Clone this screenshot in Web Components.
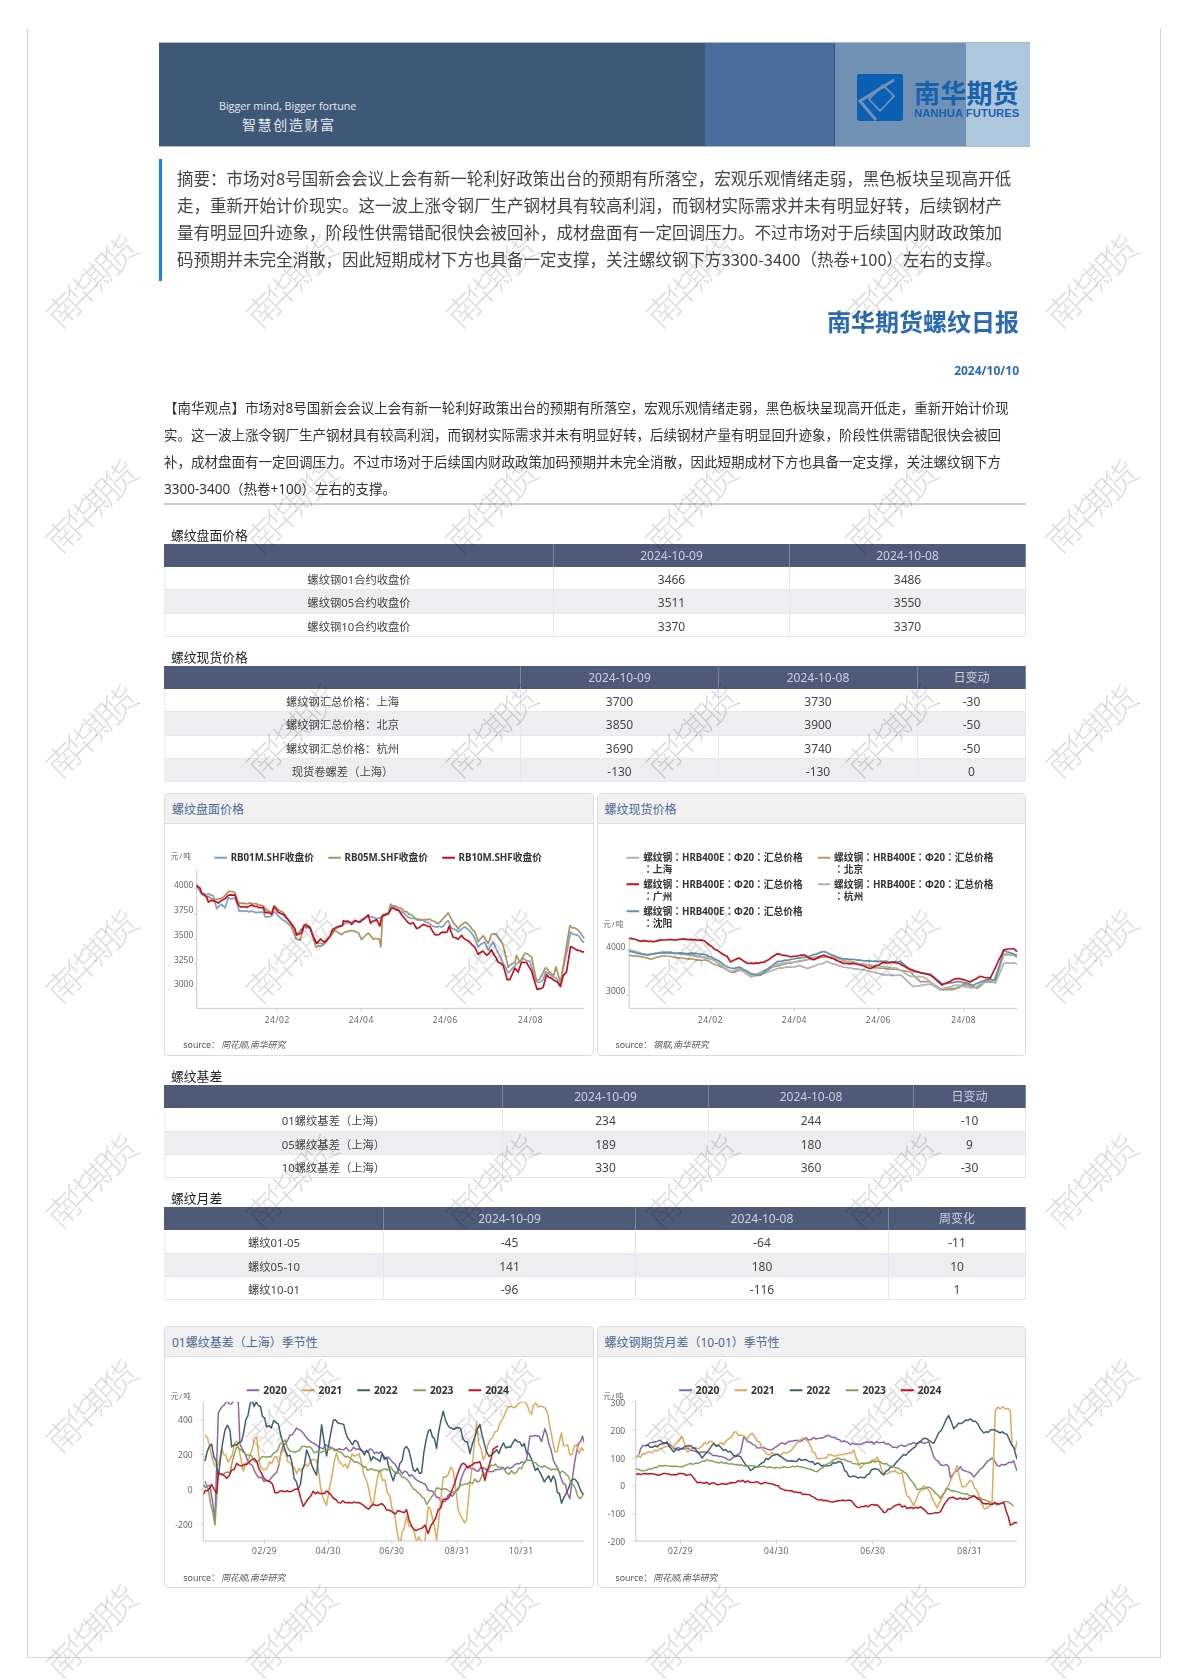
<!DOCTYPE html>
<html lang="zh-CN"><head><meta charset="utf-8"><title>南华期货螺纹日报</title>
<style>
html,body{margin:0;padding:0;background:#fff}
body{font-family:"Noto Sans","Noto Sans CJK SC",sans-serif}
nh-page{filter:blur(.3px)}
</style></head>
<body>
<nh-page>
  <nh-banner>
    <span slot="en">Bigger mind, Bigger fortune</span>
    <span slot="cn">智慧创造财富</span>
  </nh-banner>
  <nh-summary>摘要：市场对8号国新会会议上会有新一轮利好政策出台的预期有所落空，宏观乐观情绪走弱，黑色板块呈现高开低<br>走，重新开始计价现实。这一波上涨令钢厂生产钢材具有较高利润，而钢材实际需求并未有明显好转，后续钢材产<br>量有明显回升迹象，阶段性供需错配很快会被回补，成材盘面有一定回调压力。不过市场对于后续国内财政政策加<br>码预期并未完全消散，因此短期成材下方也具备一定支撑，关注螺纹钢下方3300-3400（热卷+100）左右的支撑。</nh-summary>
  <nh-heading>
    <span slot="title">南华期货螺纹日报</span>
    <span slot="date">2024/10/10</span>
  </nh-heading>
  <nh-view>【南华观点】市场对8号国新会会议上会有新一轮利好政策出台的预期有所落空，宏观乐观情绪走弱，黑色板块呈现高开低走，重新开始计价现<br>实。这一波上涨令钢厂生产钢材具有较高利润，而钢材实际需求并未有明显好转，后续钢材产量有明显回升迹象，阶段性供需错配很快会被回<br>补，成材盘面有一定回调压力。不过市场对于后续国内财政政策加码预期并未完全消散，因此短期成材下方也具备一定支撑，关注螺纹钢下方<br>3300-3400（热卷+100）左右的支撑。</nh-view>

  <nh-table style="--cols:390px 236px 1fr;--mt:24px">
    <span slot="title">螺纹盘面价格</span>
    <nh-row head><span></span><span>2024-10-09</span><span>2024-10-08</span></nh-row>
    <nh-row><span>螺纹钢01合约收盘价</span><span>3466</span><span>3486</span></nh-row>
    <nh-row alt><span>螺纹钢05合约收盘价</span><span>3511</span><span>3550</span></nh-row>
    <nh-row><span>螺纹钢10合约收盘价</span><span>3370</span><span>3370</span></nh-row>
  </nh-table>
  <nh-table style="--cols:357px 198px 199px 1fr;--mt:14px">
    <span slot="title">螺纹现货价格</span>
    <nh-row head><span></span><span>2024-10-09</span><span>2024-10-08</span><span>日变动</span></nh-row>
    <nh-row><span>螺纹钢汇总价格：上海</span><span>3700</span><span>3730</span><span>-30</span></nh-row>
    <nh-row alt><span>螺纹钢汇总价格：北京</span><span>3850</span><span>3900</span><span>-50</span></nh-row>
    <nh-row><span>螺纹钢汇总价格：杭州</span><span>3690</span><span>3740</span><span>-50</span></nh-row>
    <nh-row alt><span>现货卷螺差（上海）</span><span>-130</span><span>-130</span><span>0</span></nh-row>
  </nh-table>
  <nh-cards style="--mt:11px;--h:263px">
    <nh-card chart="a"><span slot="title">螺纹盘面价格</span></nh-card>
    <nh-card chart="b"><span slot="title">螺纹现货价格</span></nh-card>
  </nh-cards>
  <nh-table style="--cols:339px 206px 205px 1fr;--mt:14px">
    <span slot="title">螺纹基差</span>
    <nh-row head><span></span><span>2024-10-09</span><span>2024-10-08</span><span>日变动</span></nh-row>
    <nh-row><span>01螺纹基差（上海）</span><span>234</span><span>244</span><span>-10</span></nh-row>
    <nh-row alt><span>05螺纹基差（上海）</span><span>189</span><span>180</span><span>9</span></nh-row>
    <nh-row><span>10螺纹基差（上海）</span><span>330</span><span>360</span><span>-30</span></nh-row>
  </nh-table>
  <nh-table style="--cols:220px 252px 253px 1fr;--mt:14px">
    <span slot="title">螺纹月差</span>
    <nh-row head><span></span><span>2024-10-09</span><span>2024-10-08</span><span>周变化</span></nh-row>
    <nh-row><span>螺纹01-05</span><span>-45</span><span>-64</span><span>-11</span></nh-row>
    <nh-row alt><span>螺纹05-10</span><span>141</span><span>180</span><span>10</span></nh-row>
    <nh-row><span>螺纹10-01</span><span>-96</span><span>-116</span><span>1</span></nh-row>
  </nh-table>
  <nh-cards style="--mt:26px;--h:262px">
    <nh-card chart="c"><span slot="title">01螺纹基差（上海）季节性</span></nh-card>
    <nh-card chart="d"><span slot="title">螺纹钢期货月差（10-01）季节性</span></nh-card>
  </nh-cards>
  <nh-watermark></nh-watermark>
</nh-page>
<script>
const def=(name,html,extra)=>{
  customElements.define(name,class extends HTMLElement{
    constructor(){super();this.attachShadow({mode:'open'}).innerHTML=html;}
    connectedCallback(){if(extra)extra(this);}
  });
};
const CJK='"Noto Sans","Noto Sans CJK SC",sans-serif';
def('nh-page',`<style>
:host{display:block;position:relative;width:1188px;height:1680px;overflow:hidden;box-sizing:border-box;padding-top:28px;font-family:${CJK}}
.frame{box-sizing:border-box;margin:0 27px;width:1134px;height:1630px;border:1px solid #d6d6d6;border-top:0;padding:14px 0 0 131px}
.col{width:871px}
</style><div class="frame"><div class="col"><slot></slot></div></div><slot name="over"></slot>`);

def('nh-banner',`<style>
:host{display:flex;position:relative;height:105px;box-sizing:border-box;border-top:1px solid #aab9cc;border-bottom:1px solid #aab9cc}
.b1{width:547px;background:#3f5878;box-sizing:border-box;padding:56px 0 0 60px;color:#e4e8ee}
.b2{width:129px;background:#4a6d9e;border-right:1px solid #3d5877}
.b3{width:131px;background:#7192b5}
.b4{width:64px;background:#afc7dd}
.en{font:10.7px/14px "Open Sans","Noto Sans",sans-serif;width:137px;white-space:nowrap}
.cn{font:14px/20px "Noto Sans CJK SC",sans-serif;letter-spacing:1.6px;margin:1px 0 0 23px;white-space:nowrap}
.logo{position:absolute;left:698px;top:31px;width:164px;height:48px}
.logo svg{position:absolute;left:0;top:0}
.t1{position:absolute;left:57px;top:3px;font:bold 26px/30px "Noto Sans CJK SC",sans-serif;color:#1862ae;letter-spacing:.2px;white-space:nowrap}
.t2{position:absolute;left:57px;top:33px;font:bold 11.2px/13px "Liberation Sans",sans-serif;color:#1862ae;white-space:nowrap;letter-spacing:.1px}
</style>
<div class="b1"><div class="en"><slot name="en"></slot></div><div class="cn"><slot name="cn"></slot></div></div>
<div class="b2"></div><div class="b3"></div><div class="b4"></div>
<div class="logo">
<svg width="46" height="47" viewBox="0 0 46 47"><rect width="46" height="47" rx="3" fill="#0b60b3"/>
<path d="M37 6 L3 27 L19 46" stroke="#7192b5" stroke-width="3" fill="none"/><path d="M12 25 L26 11 L37 22 L23 37Z" stroke="#7192b5" stroke-width="1.8" fill="none"/></svg>
<div class="t1">南华期货</div><div class="t2">NANHUA FUTURES</div></div>`);

def('nh-summary',`<style>
:host{display:block;margin-top:12px;height:122px;box-sizing:border-box;border-left:3px solid #1a7ff0;padding:6px 0 0 15px;font:16.5px/27px "Noto Sans CJK SC",sans-serif;color:#444;white-space:nowrap}
</style><slot></slot>`);

def('nh-heading',`<style>
:host{display:block;text-align:right;padding-right:11px;color:#2a6ab5;font-family:"Noto Sans CJK SC",sans-serif}
.t{margin-top:24px;font-size:24px;font-weight:700;line-height:32px}
.d{margin-top:26px;font:700 12px/16px "Noto Sans",sans-serif}
</style><div class="t"><slot name="title"></slot></div><div class="d"><slot name="date"></slot></div>`);

def('nh-view',`<style>
:host{display:block;margin:16px 4px 0 5px;height:110px;box-sizing:border-box;border-bottom:2px solid #ccc;font:13.5px/27px "Noto Sans","Noto Sans CJK SC",sans-serif;color:#333;white-space:nowrap}
</style><slot></slot>`);

def('nh-table',`<style>
:host{display:block;margin:var(--mt,14px) 4px 0 5px}
.title{height:15px;line-height:13px;padding-left:7px;font-size:12.8px;color:#222;white-space:nowrap}
</style><div class="title"><slot name="title"></slot></div><slot></slot>`);

def('nh-row',`<style>
:host{display:grid;grid-template-columns:var(--cols);height:23.33px;box-sizing:border-box;background:#fff;border-bottom:1px solid #e6e8ee;font-size:12px;line-height:25px;color:#444}
:host([alt]){background:#eeeef0}
:host([head]){height:23px;background:#4e5a78;color:#ccd1dd;border:0;line-height:24px}
::slotted(span){display:block;text-align:center;border-right:1px solid #e6e8ee;box-sizing:border-box;white-space:nowrap;min-height:1px;overflow:visible}
::slotted(span:first-child){font-size:11.3px;border-left:1px solid #eceef2}
:host([head]) ::slotted(span){border-right-color:#7d87a0;border-left-color:transparent}
</style><slot></slot>`);

def('nh-cards',`<style>
:host{display:flex;gap:3px;margin:var(--mt,11px) 4px 0 5px;height:var(--h)}
</style><slot></slot>`);

/* ---------- chart data: traced in a 3× coordinate space ---------- */
const P=s=>s.trim().split(/\s+/).map(p=>p.split(',').map(Number));
const C20='#8d64a6',C21='#e0a858',C22='#3c5e6e',C23='#84a35a',C24='#c8101a';
const yearLegend=(dx)=>[['2020',C20,290],['2021',C21,456],['2022',C22,622],['2023',C23,790],['2024',C24,956]].map(([t,c,x])=>({t,c,x:x-dx,y:238,tx:x-dx+50}));
const CHARTS={
a:{x0:45,y0:132,h:693,axX:140,axT:268,axB:685,axR:1303,yr:130,unit:[62,227],legSize:29.3,
  yl:[['4000',314,325],['3750',388,402],['3500',465,478],['3250',538,552],['3000',612,627]],
  xl:[['24/02',382],['24/04',634],['24/06',886],['24/08',1142]],src:['source：','同花顺,南华研究',100],
  legend:[{t:'RB01M.SHF收盘价',c:'#7ba0c8',x:193,y:233,tx:242},{t:'RB05M.SHF收盘价',c:'#ab9261',x:535,y:233,tx:584},{t:'RB10M.SHF收盘价',c:'#cc0d16',x:877,y:233,tx:926}],
  step:7,amp:2.2,lw:5,
  s:[['#7ba0c8','140,318 155,340 190,345 200,385 215,375 225,382 235,355 255,355 268,393 290,393 340,398 345,412 365,410 372,395 400,420 425,440 440,465 462,440 480,445 498,490 520,490 540,470 555,445 578,435 605,425 630,422 655,410 680,415 695,412 715,400 725,380 750,390 780,415 820,420 855,442 880,440 895,420 905,445 925,455 945,440 970,465 985,500 1005,485 1015,510 1030,485 1045,520 1075,578 1100,550 1120,535 1140,545 1160,608 1180,600 1187,575 1220,595 1230,615 1250,520 1262,458 1285,468 1303,488'],
     ['#ab9261','140,312 155,340 175,350 190,358 215,355 235,335 255,337 265,368 290,370 310,370 340,378 350,392 365,398 372,378 400,398 420,430 438,478 450,480 465,432 480,438 498,500 515,498 535,478 555,452 575,462 600,450 625,458 635,478 655,458 670,478 688,475 693,502 698,405 715,398 722,373 750,385 785,405 800,420 840,418 865,432 895,400 905,420 925,445 945,425 975,455 985,485 1000,465 1015,490 1025,462 1040,462 1060,495 1075,560 1095,548 1100,525 1110,548 1125,518 1145,530 1160,600 1170,595 1187,565 1212,585 1218,562 1232,610 1245,530 1260,438 1285,450 1303,475'],
     ['#cc0d16','140,318 150,322 155,340 170,350 175,365 185,360 195,362 205,368 215,362 225,358 235,345 255,343 262,370 268,380 290,380 300,376 320,380 340,385 345,400 355,395 365,403 372,382 385,398 400,402 410,412 425,432 435,445 440,463 455,460 462,435 480,442 490,470 500,490 512,475 525,488 540,468 548,448 565,438 578,438 580,422 600,425 605,432 615,420 630,428 655,405 662,428 680,418 690,438 695,410 715,402 725,385 745,392 765,418 780,430 790,428 800,445 820,433 840,440 855,465 880,458 892,455 898,440 910,470 925,478 935,468 960,488 975,500 985,525 1000,512 1010,528 1025,510 1045,545 1060,555 1072,598 1080,600 1095,565 1105,578 1115,548 1130,548 1145,572 1162,630 1180,622 1190,585 1220,605 1232,618 1240,585 1250,575 1262,500 1285,512 1303,515']]},
b:{x0:22.5,y0:132,h:693,axX:116,axT:470,axB:685,axR:1280,yr:105,unit:[38,432],legSize:29.2,legFont:'"Noto Sans","Noto Sans CJK TC",sans-serif',legLang:'zh-TW',
  yl:[['4000',500,512],['3000',632,645]],
  xl:[['24/02',360],['24/04',612],['24/06',864],['24/08',1120]],src:['source：','钢联,南华研究',75],
  legend:[{t:'螺纹钢：HRB400E：Φ20：汇总价格',t2:'：上海',c:'#b0b0b0',x:108,y:233,tx:158},{t:'螺纹钢：HRB400E：Φ20：汇总价格',t2:'：北京',c:'#b09a68',x:682,y:233,tx:731},
  {t:'螺纹钢：HRB400E：Φ20：汇总价格',t2:'：广州',c:'#c8101a',x:108,y:313,tx:158},{t:'螺纹钢：HRB400E：Φ20：汇总价格',t2:'：杭州',c:'#b4b4b4',x:682,y:313,tx:731},
  {t:'螺纹钢：HRB400E：Φ20：汇总价格',t2:'：沈阳',c:'#5c93a8',x:108,y:394,tx:158}],
  step:8,amp:1.3,lw:5,
  s:[['#b0b0b0','116,508 170,525 220,515 300,525 370,540 420,578 450,570 480,590 510,585 560,565 630,558 650,565 710,545 760,562 820,570 880,585 930,585 970,620 1020,612 1050,630 1090,628 1120,612 1160,625 1190,602 1215,610 1240,550 1270,548 1280,552'],
     ['#b09a68','116,525 150,530 180,537 220,527 280,535 350,542 400,565 430,578 450,568 490,585 515,575 540,562 600,548 660,538 710,530 760,542 820,552 860,565 920,568 960,575 990,605 1020,605 1050,628 1100,625 1130,612 1160,625 1180,605 1210,605 1240,522 1270,525 1280,532'],
     ['#b4b4b4','116,512 160,525 220,515 300,522 370,540 420,575 450,565 480,587 520,580 560,552 620,545 680,530 720,528 770,545 830,555 880,560 920,565 960,590 1000,590 1050,628 1100,615 1150,625 1190,600 1215,605 1240,525 1280,525'],
     ['#5c93a8','116,515 170,525 220,518 340,522 370,535 420,565 450,562 480,580 510,585 560,545 620,535 650,530 700,515 750,535 800,540 880,545 930,545 970,575 1020,582 1055,612 1110,605 1150,615 1190,598 1215,600 1240,512 1280,525'],
     ['#c8101a','116,475 150,483 190,484 210,480 300,478 340,482 370,505 410,530 420,545 445,535 470,550 490,550 520,548 560,522 600,530 640,525 670,540 700,525 760,550 800,552 840,565 880,548 920,548 960,568 990,578 1020,585 1055,615 1080,603 1100,595 1140,605 1170,590 1200,595 1240,510 1270,505 1280,515']]},
c:{x0:45,y0:138,h:690,axX:160,axT:272,axB:690,axR:1303,yr:128,unit:[62,254],clip:1,legSize:31,
  yl:[['400',326,326],['200',430,430],['0',535,535],['-200',640,640]],
  xl:[['02/29',344],['04/30',535],['06/30',726],['08/31',922],['10/31',1114]],src:['source：','同花顺,南华研究',100],
  legend:yearLegend(0),step:7,amp:10,lw:4.4,
  s:[[C20,'160,520 180,530 195,625 205,300 230,272 265,272 270,400 300,460 320,490 350,510 380,490 400,400 440,350 470,380 500,405 560,410 640,415 700,430 750,480 800,500 860,555 880,570 920,540 950,470 1000,475 1030,480 1080,470 1130,450 1140,375 1175,385 1185,350 1210,440 1240,510 1260,560 1280,420 1298,370 1303,395',.7],
     [C21,'165,372 180,420 200,460 215,425 240,450 260,378 280,480 320,380 330,470 380,450 400,430 440,480 500,440 512,540 530,570 560,420 580,480 620,420 650,510 670,580 690,470 720,570 750,690 770,620 800,690 825,680 835,580 860,680 880,500 910,470 925,590 950,630 960,520 980,350 1000,450 1020,400 1050,340 1075,272 1090,290 1110,272 1145,310 1150,272 1180,280 1200,340 1215,420 1235,380 1260,430 1280,410 1303,420',1.6],
     [C22,'165,450 185,400 205,490 225,345 240,350 245,410 275,390 300,275 325,280 350,340 385,340 400,410 420,440 445,540 470,420 500,490 515,345 530,440 550,320 575,330 600,385 630,410 670,450 710,430 730,520 770,400 790,470 815,480 835,355 860,400 880,300 900,350 925,345 960,420 990,340 1010,430 1040,420 1075,400 1110,390 1130,420 1150,470 1190,510 1210,500 1235,580 1270,500 1290,520 1303,550',1.3],
     [C23,'165,510 175,540 195,640 205,490 240,480 260,410 290,430 320,450 370,430 405,385 420,425 470,405 500,425 540,410 600,440 640,470 680,480 720,470 770,510 830,575 860,535 910,540 945,520 990,505 1030,460 1070,485 1100,485 1130,450 1170,465 1210,475 1250,490 1290,560 1303,545',.6],
     [C24,'160,550 185,520 200,545 205,485 230,500 260,460 290,465 315,440 340,500 360,510 375,540 405,545 445,535 460,590 490,545 530,545 565,570 620,575 650,590 690,580 730,605 770,600 785,645 805,658 825,640 835,665 880,570 900,560 935,460 960,470 990,450 1005,505 1030,420 1045,405',.6]]},
d:{x0:22.5,y0:138,h:690,axX:136,axT:272,axB:690,axR:1280,yr:104,unit:[38,254],clip:1,legSize:31,
  yl:[['300',275,272],['200',358,358],['100',442,442],['0',525,525],['-100',608,608],['-200',692,690]],
  xl:[['02/29',270],['04/30',558],['06/30',847],['08/31',1138]],src:['source：','同花顺,南华研究',75],
  legend:yearLegend(24),step:7,amp:4,lw:4.4,
  s:[[C20,'146,430 150,410 185,395 215,390 250,410 300,415 360,430 420,445 450,425 460,380 500,410 545,415 570,400 640,385 720,375 780,400 830,395 880,395 920,410 970,395 1015,395 1030,440 1050,460 1075,465 1080,500 1110,470 1150,495 1190,455 1205,440 1220,465 1270,450 1280,480'],
     [C21,'136,440 170,425 250,405 275,375 290,420 320,410 350,395 400,400 430,365 470,380 485,365 530,430 560,430 600,420 640,375 680,440 750,430 790,420 810,470 860,440 880,490 920,480 935,490 950,555 970,580 1000,520 1020,550 1040,590 1100,470 1115,530 1145,510 1180,590 1205,585 1215,295 1245,290 1260,300 1265,400 1275,420 1280,390',1.4],
     [C22,'165,405 200,405 230,395 250,420 300,400 335,440 370,400 420,425 450,440 480,480 520,450 560,430 590,450 640,445 700,465 750,450 775,500 830,495 850,470 880,490 920,450 960,420 1000,380 1030,400 1060,340 1075,310 1090,350 1140,320 1170,350 1180,370 1215,355 1250,375 1270,410 1280,445',1.2],
     [C23,'136,475 165,480 205,465 280,465 350,448 420,460 480,465 560,470 620,465 680,480 740,440 800,460 860,450 930,475 950,490 980,535 1020,530 1050,560 1070,535 1110,545 1150,555 1190,570 1220,580 1250,570 1270,585',.6],
     [C24,'136,490 170,490 230,490 300,490 320,515 400,520 450,510 550,520 590,540 650,550 700,570 780,570 800,590 860,580 880,605 920,580 950,590 990,590 1020,610 1050,600 1075,560 1130,565 1155,555 1180,580 1240,575 1260,640 1280,635',.8]]}
};
function seeded(n){let s=n>>>0;return()=>{s=(s*1664525+1013904223)>>>0;return s/4294967296-.5};}
function wiggle(pts,step,amp,seed){
  const r=seeded(seed),out=[];
  for(let i=0;i<pts.length-1;i++){
    const [x1,y1]=pts[i],[x2,y2]=pts[i+1],n=Math.max(1,Math.round((x2-x1)/step));
    for(let k=0;k<n;k++){
      const t=k/n,e=i===0&&k===0?0:(r()*2*amp);
      out.push((x1+(x2-x1)*t).toFixed(1)+','+(y1+(y2-y1)*t+e).toFixed(1));
    }
  }
  const l=pts[pts.length-1];out.push(l[0]+','+l[1]);
  return out.join(' ');
}
function chartSvg(key){
  const c=CHARTS[key];let o='';
  const vb=`${c.x0} ${c.y0} 1283 ${c.h}`;
  const ax='#c9c9c9';
  o+=`<path d="M${c.axX} ${c.axT}V${c.axB}H${c.axR}" fill="none" stroke="${ax}" stroke-width="3"/>`;
  c.yl.forEach(([t,y,ty])=>{
    o+=`<path d="M${c.axX-8} ${ty}H${c.axX}" stroke="${ax}" stroke-width="3"/>`;
    o+=`<text x="${c.yr}" y="${y}" text-anchor="end" dominant-baseline="central" class="ax">${t}</text>`;
  });
  c.xl.forEach(([t,x])=>{
    o+=`<path d="M${x} ${c.axB}v8" stroke="${ax}" stroke-width="3"/>`;
    o+=`<text x="${x}" y="718" text-anchor="middle" dominant-baseline="central" class="ax" letter-spacing="1.5">${t}</text>`;
  });
  o+=`<text x="${c.unit[0]}" y="${c.unit[1]}" dominant-baseline="central" class="unit">元/吨</text>`;
  const ls=`font-size:${c.legSize}px${c.legFont?';font-family:'+c.legFont.replace(/"/g,"'"):''}`;
  const la=c.legLang?`lang="${c.legLang}"`:'';
  c.legend.forEach(l=>{
    o+=`<path d="M${l.x} ${l.y}h38" stroke="${l.c}" stroke-width="6" fill="none"/>`;
    o+=`<text ${la} x="${l.tx}" y="${l.y}" dominant-baseline="central" class="leg" style="${ls}">${l.t}</text>`;
    if(l.t2)o+=`<text ${la} x="${l.tx}" y="${l.y+36}" dominant-baseline="central" class="leg" style="${ls}">${l.t2}</text>`;
  });
  if(c.clip)o+=`<clipPath id="cp"><rect x="${c.axX}" y="${c.axT}" width="${c.axR-c.axX}" height="${c.axB-c.axT}"/></clipPath>`;
  o+=`<g ${c.clip?'clip-path="url(#cp)"':''} fill="none" stroke-width="${c.lw}" stroke-linejoin="round">`;
  c.s.forEach(([col,d,m],i)=>{
    o+=`<polyline stroke="${col}" points="${wiggle(P(d),c.step,c.amp*(m||1),key.charCodeAt(0)*97+i*131)}"/>`;
  });
  o+='</g>';
  const y=c.y0===132?794:801;
  o+=`<text x="${c.src[2]}" y="${y}" dominant-baseline="central" class="src">${c.src[0]}<tspan font-style="italic" dx="4">${c.src[1]}</tspan></text>`;
  return `<svg viewBox="${vb}" preserveAspectRatio="none" xmlns="http://www.w3.org/2000/svg">${o}</svg>`;
}
def('nh-card',`<style>
:host{display:flex;flex-direction:column;flex:1 1 0;min-width:0;box-sizing:border-box;border:1px solid #dcdcdc;border-radius:4px;overflow:hidden;background:transparent}
.h{height:30px;box-sizing:border-box;background:#f1f1f1;border-bottom:1px solid #ddd;padding-left:7px;font-size:12px;line-height:31px;color:#4a6a94;white-space:nowrap}
.b{flex:1;min-height:0}
svg{display:block;width:100%;height:100%}
text{font-family:${CJK}}
.ax{font-size:25.5px;fill:#666}
.unit{font-size:23px;fill:#666;letter-spacing:3px}
.leg{font-weight:700;fill:#333}
.src{font-size:26.5px;fill:#555}
</style><div class="h"><slot name="title"></slot></div><div class="b"></div>`,
el=>{el.shadowRoot.querySelector('.b').innerHTML=chartSvg(el.getAttribute('chart'));});

def('nh-watermark',`<style>
:host{position:absolute;left:-11px;top:170px;width:1200px;display:grid;grid-template-columns:repeat(6,200px);grid-auto-rows:225px;pointer-events:none;z-index:5}
div{display:flex;align-items:center;justify-content:center}
span{display:block;transform:rotate(-45deg);font:300 33px/33px "Noto Sans CJK SC",sans-serif;letter-spacing:-6px;color:rgba(0,0,0,.14);white-space:nowrap}
</style><div id="g" style="display:contents"></div>`,
el=>{el.shadowRoot.getElementById('g').innerHTML='<div><span>南华期货</span></div>'.repeat(42);});
</script>
</body></html>
